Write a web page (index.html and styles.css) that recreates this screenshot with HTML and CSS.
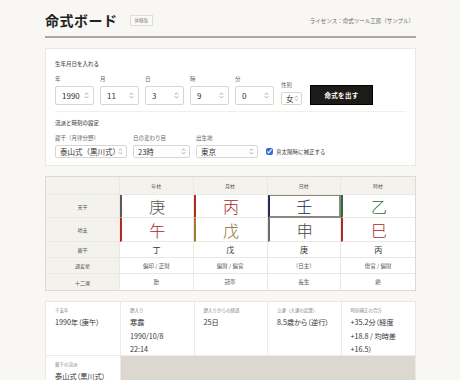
FILE: index.html
```html
<!DOCTYPE html>
<html lang="ja">
<head>
  <meta charset="UTF-8">
  <meta name="viewport" content="width=device-width, initial-scale=1.0">
  <title>命式ボード</title>
  <link rel="stylesheet" href="styles.css">
</head>
<body>

<div class="board">
  <header class="head">
    <div class="head-left">
      <h1>命式ボード</h1>
      <span class="badge">体験版</span>
    </div>
    <div class="license">ライセンス：命式ツール工房（サンプル）</div>
  </header>

  <section class="card form">
    <h2>生年月日を入れる</h2>
    <div class="row birth">
      <div class="fld w38"><label>年</label><div class="box">1990<svg class="spin" viewBox="0 0 6 8"><path d="M1 3 L3 1 L5 3 M1 5 L3 7 L5 5"/></svg></div></div>
      <div class="fld w38"><label>月</label><div class="box">11<svg class="spin" viewBox="0 0 6 8"><path d="M1 3 L3 1 L5 3 M1 5 L3 7 L5 5"/></svg></div></div>
      <div class="fld w38"><label>日</label><div class="box">3<svg class="spin" viewBox="0 0 6 8"><path d="M1 3 L3 1 L5 3 M1 5 L3 7 L5 5"/></svg></div></div>
      <div class="fld w38"><label>時</label><div class="box">9<svg class="spin" viewBox="0 0 6 8"><path d="M1 3 L3 1 L5 3 M1 5 L3 7 L5 5"/></svg></div></div>
      <div class="fld w38"><label>分</label><div class="box">0<svg class="spin" viewBox="0 0 6 8"><path d="M1 3 L3 1 L5 3 M1 5 L3 7 L5 5"/></svg></div></div>
      <div class="fld sex"><label>性別</label><div class="box small">女<svg class="spin" viewBox="0 0 6 8"><path d="M1 3 L3 1 L5 3 M1 5 L3 7 L5 5"/></svg></div></div>
      <button class="go">命式を出す</button>
    </div>
    <div class="sep"></div>
    <h2>流派と時刻の設定</h2>
    <div class="row opts">
      <div class="fld w72"><label>蔵干（月律分野）</label><div class="box small">泰山式（黒川式）<svg class="spin" viewBox="0 0 6 8"><path d="M1 3 L3 1 L5 3 M1 5 L3 7 L5 5"/></svg></div></div>
      <div class="fld w57"><label>日の変わり目</label><div class="box small">23時<svg class="spin" viewBox="0 0 6 8"><path d="M1 3 L3 1 L5 3 M1 5 L3 7 L5 5"/></svg></div></div>
      <div class="fld w62"><label>出生地</label><div class="box small">東京<svg class="spin" viewBox="0 0 6 8"><path d="M1 3 L3 1 L5 3 M1 5 L3 7 L5 5"/></svg></div></div>
      <label class="check"><input type="checkbox" checked> 真太陽時に補正する</label>
    </div>
  </section>

  <section class="card chart">
    <div class="c hd"></div>
    <div class="c hd">年柱</div>
    <div class="c hd">月柱</div>
    <div class="c hd">日柱</div>
    <div class="c hd">時柱</div>

    <div class="c lb">天干</div>
    <div class="c big metal">庚</div>
    <div class="c big fire">丙</div>
    <div class="c big water day">壬</div>
    <div class="c big wood">乙</div>

    <div class="c lb">地支</div>
    <div class="c big fire">午</div>
    <div class="c big earth">戊</div>
    <div class="c big metal2">申</div>
    <div class="c big fire">巳</div>

    <div class="c lb">蔵干</div>
    <div class="c mid">丁</div>
    <div class="c mid">戊</div>
    <div class="c mid">庚</div>
    <div class="c mid">丙</div>

    <div class="c lb">通変星</div>
    <div class="c sm">偏印 / 正財</div>
    <div class="c sm">偏財 / 偏官</div>
    <div class="c sm">（日主）</div>
    <div class="c sm">傷官 / 偏財</div>

    <div class="c lb">十二運</div>
    <div class="c sm">胎</div>
    <div class="c sm">冠帯</div>
    <div class="c sm">長生</div>
    <div class="c sm">絶</div>
  </section>

  <section class="info">
    <div class="cell"><div class="k">干支年</div><div class="v">1990年（庚午）</div></div>
    <div class="cell"><div class="k">節入り</div><div class="v">寒露<br>1990/10/8<br>22:14</div></div>
    <div class="cell"><div class="k">節入りからの経過</div><div class="v">25日</div></div>
    <div class="cell"><div class="k">立運（大運の起算）</div><div class="v">8.5歳から（逆行）</div></div>
    <div class="cell"><div class="k">時刻補正の合計</div><div class="v">+35.2分（経度 +18.8 / 均時差 +16.5）</div></div>
    <div class="cell"><div class="k">蔵干の流派</div><div class="v">泰山式（黒川式）</div></div>
  </section>
</div>

</body>
</html>
```

FILE: styles.css
```css
body {
  margin: 0;
  background-color: #f8f7f4;
  font-family: "Noto Sans CJK JP", "Noto Sans", sans-serif;
  color: #333;
}
.board {
  width: 371px;
  margin-left: 45px;
}
.head {
  display: flex;
  justify-content: space-between;
  align-items: flex-end;
  height: 38px;
  border-bottom: 2px solid #aca79e;
  box-sizing: border-box;
  padding-bottom: 8px;
}
.head-left {
  display: flex;
  align-items: center;
  gap: 12px;
}
h1 {
  margin: 0;
  font-size: 14px;
  font-weight: 700;
  line-height: 16px;
  color: #222;
  letter-spacing: 0.5px;
}
.badge {
  font-size: 4.5px;
  color: #888;
  border: 1px solid #ddd;
  background: #fbfaf8;
  padding: 2px 4px;
  line-height: 5px;
}
.license {
  font-size: 5.5px;
  color: #666;
  line-height: 8px;
  padding-bottom: 3px;
  margin-right: 2px;
}
.card {
  background: #fff;
  border: 1px solid #ebe8e2;
}
.form {
  margin-top: 10px;
  padding: 11px 9px 7px;
}
h2 {
  margin: 0 0 8px;
  font-size: 5.5px;
  font-weight: 500;
  color: #555;
  line-height: 8px;
}
.row {
  display: flex;
  align-items: flex-end;
  gap: 6px;
}
.fld label {
  display: block;
  font-size: 5.5px;
  color: #666;
  line-height: 7px;
  margin-bottom: 3px;
}
.w38 { width: 39px; }
.w72 { width: 72px; }
.w57 { width: 57px; }
.w62 { width: 62px; }
.box {
  display: flex;
  justify-content: space-between;
  align-items: center;
  height: 19px;
  box-sizing: border-box;
  border: 1px solid #d8d6d2;
  border-radius: 2px;
  padding: 0 4px 0 6px;
  font-size: 8px;
  color: #333;
  background: #fff;
}
.box.small {
  height: 13px;
  padding: 0 3px 0 4px;
  font-size: 7.5px;
}
.spin {
  width: 5px;
  height: 7px;
  fill: none;
  stroke: #888;
  stroke-width: 0.9;
}
.sex {
  width: 21px;
  margin-left: 1px;
}
.go {
  width: 63px;
  height: 20px;
  margin-left: 2px;
  background: #1d1b18;
  color: #fff;
  border: 1px solid #000;
  font-family: inherit;
  font-size: 6.5px;
  font-weight: 700;
  padding: 0;
  letter-spacing: 0.3px;
}
.sep {
  height: 0;
  border-top: 1px solid #f1efeb;
  margin: 6px 0 7px;
}
.check {
  display: flex;
  align-items: center;
  gap: 3px;
  font-size: 5.5px;
  color: #444;
  margin-left: 2px;
  height: 13px;
}
.check input {
  width: 7px;
  height: 7px;
  margin: 0;
  accent-color: #2f6fd8;
}
.chart {
  margin-top: 10px;
  display: grid;
  grid-template-columns: 74px repeat(4, 1fr);
  grid-template-rows: 18px 23px 24px 16px 16px 16px;
  border-color: #dedad3;
}
.c {
  display: flex;
  align-items: center;
  justify-content: center;
  border-bottom: 1px solid #ebe8e3;
  border-right: 1px solid #ebe8e3;
  box-sizing: border-box;
}
.c:nth-child(5n) {
  border-right: none;
}
.c:nth-last-child(-n+5) {
  border-bottom: none;
}
.hd,
.lb {
  background: #f4f2ed;
  font-size: 5px;
  color: #555;
}
.big {
  font-size: 16px;
  font-weight: 300;
  border-left: 2px solid transparent;
  line-height: 16px;
}
.metal { color: #555; border-left-color: #5d5851; }
.metal2 { color: #444; border-left-color: #6d6a64; }
.fire { color: #a8262a; border-left-color: #b02a24; }
.earth { color: #8c6a2c; border-left-color: #a07a34; }
.water { color: #1f2a55; border-left-color: #1f2a66; }
.wood { color: #2e6a3c; border-left-color: #2f6b3f; }
.day {
  border-top: 1px solid #8a8780;
  border-right: 2px solid #8a8780;
  border-bottom: 2px solid #8a8780;
}
.mid {
  font-size: 8px;
  color: #333;
}
.sm {
  font-size: 5.5px;
  color: #555;
}
.info {
  margin-top: 10px;
  display: grid;
  grid-template-columns: 75px repeat(4, 1fr);
  grid-template-rows: 54px 40px;
  background: #dcd8d0;
  border: 1px solid #ebe8e2;
}
.cell {
  background: #fff;
  padding: 5px 7px 5px 9px;
  border-right: 1px solid #eeebe6;
  border-bottom: 1px solid #eeebe6;
}
.cell:nth-child(5) {
  border-right: none;
}
.k {
  font-size: 4.5px;
  color: #888;
  line-height: 7px;
  margin-bottom: 2px;
}
.v {
  font-size: 7.2px;
  color: #333;
  line-height: 13.5px;
  font-feature-settings: "palt";
}
```
